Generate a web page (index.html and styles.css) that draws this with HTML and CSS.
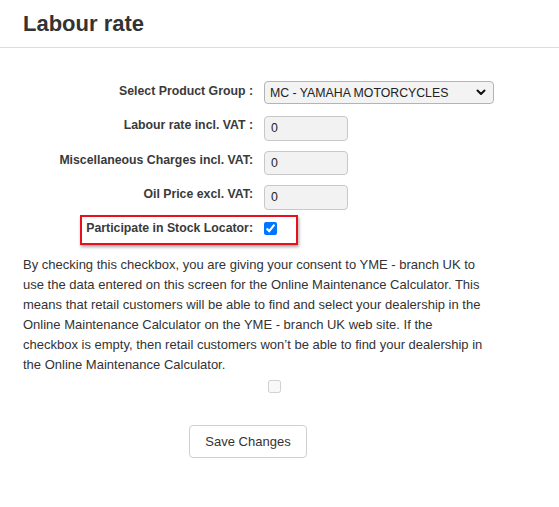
FILE: index.html
```html
<!DOCTYPE html>
<html lang="en">
<head>
<meta charset="utf-8">
<title>Labour rate</title>
<link rel="stylesheet" href="styles.css">
</head>
<body>
<header class="page-header">
  <h1 class="page-title">Labour rate</h1>
</header>
<form class="form">
  <div class="fields">
    <div class="row row-select">
      <label class="lbl" for="pg">Select Product Group :</label>
      <div class="select-wrap">
        <select id="pg" class="select">
          <option>MC - YAMAHA MOTORCYCLES</option>
        </select>
        <svg class="chevron" width="10" height="7" viewBox="0 0 10 7" aria-hidden="true"><path d="M1.5 1.5 L5 5 L8.5 1.5" fill="none" stroke="#111" stroke-width="2" stroke-linecap="round" stroke-linejoin="round"/></svg>
      </div>
    </div>
    <div class="row">
      <label class="lbl" for="lr">Labour rate incl. VAT :</label>
      <input id="lr" class="input" type="text" value="0">
    </div>
    <div class="row">
      <label class="lbl" for="mc">Miscellaneous Charges incl. VAT:</label>
      <input id="mc" class="input" type="text" value="0">
    </div>
    <div class="row">
      <label class="lbl" for="op">Oil Price excl. VAT:</label>
      <input id="op" class="input" type="text" value="0">
    </div>
    <div class="row row-check">
      <span class="highlight" aria-hidden="true"></span>
      <label class="lbl" for="sl">Participate in Stock Locator:</label>
      <input id="sl" class="check" type="checkbox" checked>
    </div>
  </div>
  <p class="consent">By checking this checkbox, you are giving your consent to YME - branch UK to use the data entered on this screen for the Online Maintenance Calculator. This means that retail customers will be able to find and select your dealership in the Online Maintenance Calculator on the YME - branch UK web site. If the checkbox is empty, then retail customers won’t be able to find your dealership in the Online Maintenance Calculator.</p>
  <div class="consent-check"><input class="check" type="checkbox" disabled></div>
  <div class="actions"><button type="button" class="btn">Save Changes</button></div>
</form>
</body>
</html>
```
FILE: styles.css
```css
html, body {
  margin: 0;
  padding: 0;
  background: #fff;
  font-family: "Liberation Sans", Arial, sans-serif;
  color: #333;
}

.page-header {
  padding: 13px 23px 12px;
  border-bottom: 1px solid #dcdcdc;
}

.page-title {
  margin: 0;
  font-size: 22px;
  line-height: 22px;
  font-weight: bold;
  color: #333;
}

.form {
  padding: 33px 0 0 23px;
  margin: 0;
}

.fields {
  display: flex;
  flex-direction: column;
  gap: 10px;
}

.row {
  display: flex;
  align-items: flex-start;
  gap: 11px;
}

.row-select {
  margin-bottom: 2px;
}

.lbl {
  width: 230px;
  flex: none;
  text-align: right;
  font-size: 12.3px;
  line-height: 16px;
  font-weight: bold;
  color: #3a3a3a;
  padding-top: 1px;
}

.row-select .lbl {
  padding-top: 2px;
}

.select-wrap {
  position: relative;
  width: 230px;
  height: 23px;
}

.select {
  appearance: none;
  -webkit-appearance: none;
  box-sizing: border-box;
  width: 230px;
  height: 23px;
  margin: 0;
  padding: 0 20px 0 5px;
  border: 1px solid #b4b4b4;
  border-radius: 4px;
  background: #f3f3f3;
  font-family: "Liberation Sans", Arial, sans-serif;
  font-size: 12.3px;
  color: #222;
}

.chevron {
  position: absolute;
  right: 8px;
  top: 8px;
  pointer-events: none;
}

.input {
  box-sizing: border-box;
  width: 84px;
  height: 24.5px;
  margin: 0;
  padding: 0 6px;
  border: 1px solid #c8c8c8;
  border-radius: 4px;
  background: #f2f2f2;
  font-family: "Liberation Sans", Arial, sans-serif;
  font-size: 12.3px;
  color: #222;
}

.row-check {
  position: relative;
}

.row-check .lbl {
  padding-top: 0;
}

.check {
  width: 13px;
  height: 13px;
  margin: 2px 0 0;
}

.highlight {
  position: absolute;
  left: 57px;
  top: -5px;
  width: 218px;
  height: 30px;
  box-sizing: border-box;
  border: 2px solid #e8101a;
  box-shadow: 1px 2px 3px rgba(0, 0, 0, 0.35);
  pointer-events: none;
}

.consent {
  width: 464px;
  margin: 19px 0 0;
  font-size: 13px;
  line-height: 20px;
  color: #333;
}

.consent-check {
  padding-left: 245px;
  margin-top: 4px;
  height: 15px;
}

.consent-check .check {
  margin: 1px 0 0;
}

.actions {
  margin-top: 31px;
  padding-left: 166px;
}

.btn {
  box-sizing: border-box;
  width: 118px;
  height: 33px;
  margin: 0;
  padding: 0;
  border: 1px solid #cfcfcf;
  border-radius: 4px;
  background: #fff;
  font-family: "Liberation Sans", Arial, sans-serif;
  font-size: 13px;
  color: #333;
}
```
